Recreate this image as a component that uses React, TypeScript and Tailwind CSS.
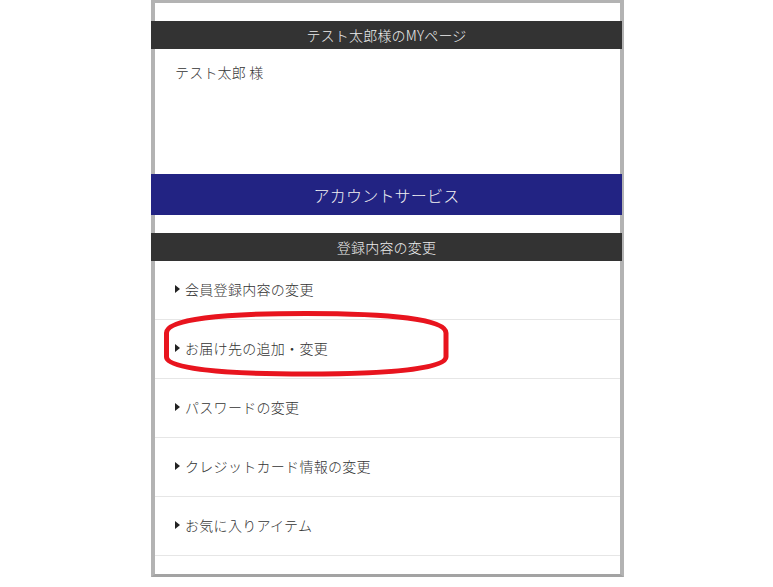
const font = "font-['Noto_Sans_CJK_JP','Noto_Sans',sans-serif] font-light";

const items = [
  "会員登録内容の変更",
  "お届け先の追加・変更",
  "パスワードの変更",
  "クレジットカード情報の変更",
  "お気に入りアイテム",
];

function Arrow() {
  return (
    <svg width="5" height="8" viewBox="0 0 5 8" className="mr-[5px] shrink-0">
      <path d="M0 0 L5 4 L0 8 Z" fill="#222" />
    </svg>
  );
}

function SectionBar({ title }: { title: string }) {
  return (
    <div className="-ml-1 -mr-[2px] h-[28px] bg-[#333333] flex items-center justify-center text-[14px] text-[#eeeeee] leading-none tracking-[0.2px]">
      {title}
    </div>
  );
}

export default function App() {
  return (
    <div className={`w-[773px] h-[587px] bg-white ${font}`}>
      <div className="relative ml-[151px] w-[473px] h-[577px] border-x-4 border-t-[3px] border-b-[3px] border-[#b3b3b3] border-b-[#a3a3a3] bg-white">
        <div className="h-[18px]" />
        <SectionBar title="テスト太郎様のMYページ" />
        <div className="h-[125px] pl-5 pt-[13px] text-[14px] text-[#333] leading-5 tracking-[0.2px]">
          テスト太郎 様
        </div>

        <div className="-ml-1 -mr-[2px] h-[41px] bg-[#222383] flex items-center justify-center text-[16px] text-[#f2f2f2] tracking-[0.2px]">
          アカウントサービス
        </div>

        <div className="h-[18px]" />
        <SectionBar title="登録内容の変更" />

        <ul>
          {items.map((label) => (
            <li
              key={label}
              className="h-[59px] border-b border-[#e6e6e6] flex items-center pl-5 pb-[2px] text-[14px] text-[#333] tracking-[0.3px]"
            >
              <Arrow />
              {label}
            </li>
          ))}
        </ul>

        {/* red annotation around 2nd item */}
        <svg
          className="absolute left-[7px] top-[306px] pointer-events-none"
          width="292"
          height="70"
          viewBox="0 0 292 70"
        >
          <path
            d="M4.5 24 C4.5 10 60 4.5 144 4.5 C228 4.5 284 10 284 24 L284 48 C284 60 228 65 144 65 C60 65 4.5 60 4.5 48 Z"
            fill="none"
            stroke="#e8141e"
            strokeWidth="5"
          />
        </svg>
      </div>
    </div>
  );
}
